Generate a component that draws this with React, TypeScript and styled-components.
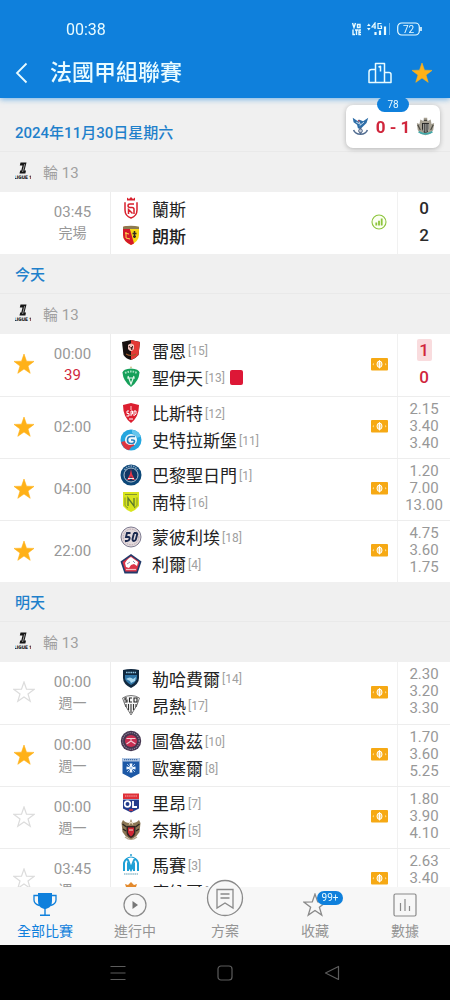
import React from "react";
import styled, { createGlobalStyle, css } from "styled-components";

const blue = "#0f80dc";
const gold = "#ffb118";

const GlobalStyle = createGlobalStyle`
  *, *::before, *::after { box-sizing: border-box; }
  body {
    margin: 0;
    background: #fff;
    color: #222;
    font-family: Roboto, "Noto Sans CJK TC", sans-serif;
  }
  button { font: inherit; color: inherit; background: none; border: 0; padding: 0; cursor: pointer; }
  h1, h2, ul, p { margin: 0; padding: 0; }
  ul { list-style: none; }
  svg { display: block; flex: none; }
`;

const Screen = styled.div`
  position: relative;
  display: flex;
  flex-direction: column;
  height: 100vh;
`;

const Header = styled.header`
  flex: none;
  position: relative;
  z-index: 1;
  background: ${blue};
  color: #e9fbff;
  box-shadow: 0 1px 6px rgba(15, 128, 220, 0.6);
`;

const StatusBar = styled.div`
  display: flex;
  align-items: center;
  justify-content: space-between;
  height: 48px;
  padding: 10px 28px 0 66px;
  font-size: 16px;
`;

const StatusIcons = styled.div`
  display: flex;
  align-items: center;
  gap: 6px;
`;

const TitleBar = styled.div`
  display: flex;
  align-items: center;
  height: 50px;
  padding: 0 17px 0 14px;
`;

const BackButton = styled.button`
  width: 36px;
`;

const Title = styled.h1`
  flex: 1;
  font-size: 22px;
  line-height: 30px;
  font-weight: 500;
`;

const HeaderActions = styled.div`
  display: flex;
  align-items: center;
  gap: 19px;
`;

const LiveCard = styled.aside`
  position: absolute;
  z-index: 2;
  top: 105px;
  right: 10px;
  display: flex;
  align-items: center;
  justify-content: space-between;
  width: 94px;
  height: 43px;
  padding: 0 5px;
  border-radius: 7px;
  background: #fff;
  box-shadow: 0 1px 5px rgba(0, 0, 0, 0.25);
`;

const LiveMinute = styled.span`
  position: absolute;
  top: -8px;
  left: 31px;
  width: 32px;
  height: 15px;
  border-radius: 8px;
  background: ${blue};
  color: #e9fbff;
  font-size: 10px;
  line-height: 15px;
  text-align: center;
`;

const LiveScore = styled.strong`
  color: #d0263c;
  font-size: 17px;
  font-weight: 700;
`;

const Feed = styled.main`
  flex: 1;
  min-height: 0;
  overflow-y: auto;
  scrollbar-width: none;
  padding-top: 14px;
  background: #f0f0f0;
`;

const DateHeading = styled.h2`
  height: 40px;
  padding: 0 15px;
  border-bottom: 1px solid #e9e9e9;
  color: #1f80cb;
  font-size: 15px;
  line-height: 43px;
  font-weight: 500;
`;

const RoundLine = styled.div`
  display: flex;
  align-items: center;
  gap: 12px;
  height: 40px;
  padding: 0 15px 2px;
  color: #a0a0a0;
  font-size: 15px;
`;

const MatchRow = styled.li`
  display: flex;
  height: 62px;
  background: #fff;
  & + & { border-top: 1px solid #ededed; }
`;

const Favourite = styled.button`
  display: grid;
  place-items: center;
  flex: none;
  width: 48px;
  padding-bottom: 2px;
`;

const TimeCell = styled.div`
  display: flex;
  flex-direction: column;
  justify-content: center;
  flex: none;
  width: 62px;
  padding-right: 13px;
  color: #989898;
  font-size: 15px;
  line-height: 21px;
  text-align: center;
`;

const TimeNote = styled.span<{ $live?: boolean }>`
  font-size: ${(p) => (p.$live ? 15 : 14)}px;
  ${(p) => p.$live && css`color: #d0263c;`}
`;

const Teams = styled.div`
  display: flex;
  flex-direction: column;
  justify-content: center;
  flex: 1;
  min-width: 0;
  padding: 0 0 3px 9px;
  border-left: 1px solid #ededed;
`;

const Team = styled.div<{ $winner?: boolean }>`
  display: flex;
  align-items: center;
  height: 27px;
  color: #222;
  font-size: 17px;
  font-weight: ${(p) => (p.$winner ? 500 : 400)};
  white-space: nowrap;
`;

const TeamName = styled.span`
  margin-left: 10px;
`;

const Rank = styled.span`
  margin-left: 2px;
  padding-top: 2px;
  color: #a0a0a0;
  font-size: 12px;
`;

const RedCard = styled.span`
  width: 13px;
  height: 15px;
  margin-left: 5px;
  border-radius: 2px;
  background: #dd1736;
`;

const FeatureCell = styled.div`
  display: grid;
  place-items: center;
  flex: none;
  width: 36px;
  padding-bottom: 2px;
`;

const Figures = styled.div`
  display: flex;
  flex-direction: column;
  align-items: center;
  justify-content: center;
  flex: none;
  width: 53px;
  padding-bottom: 3px;
  border-left: 1px solid #f1f1f1;
`;

const Odd = styled.span`
  color: #989898;
  font-size: 15px;
  line-height: 17px;
`;

const ScoreLine = styled.span`
  display: grid;
  place-items: center;
  height: 27px;
`;

const Score = styled.span<{ $live?: boolean; $fresh?: boolean }>`
  width: 15px;
  color: ${(p) => (p.$live ? "#d0263c" : "#2b2b2b")};
  background: ${(p) => (p.$fresh ? "#f9dcde" : "transparent")};
  border-radius: 2px;
  font-size: 17px;
  line-height: 22px;
  font-weight: 500;
  text-align: center;
`;

const TabBar = styled.nav`
  position: relative;
  display: flex;
  flex: none;
  height: 58px;
  background: #f7f7f7;
`;

const Tab = styled.button<{ $active?: boolean }>`
  display: flex;
  flex-direction: column;
  align-items: center;
  justify-content: flex-end;
  flex: 1;
  padding-bottom: 4px;
  color: ${(p) => (p.$active ? blue : "#949494")};
  font-size: 14px;
  line-height: 20px;
`;

const TabIcon = styled.span`
  position: relative;
  display: flex;
  align-items: flex-end;
  height: 26px;
  margin-bottom: 4px;
`;

const TabBadge = styled.span`
  position: absolute;
  top: 0;
  left: 14px;
  width: 26px;
  height: 14px;
  border-radius: 7px;
  background: ${blue};
  color: #e9fbff;
  font-size: 10px;
  line-height: 14px;
`;

const SystemBar = styled.nav`
  display: flex;
  flex: none;
  height: 55px;
  padding: 0 64px;
  background: #000;
`;

const SystemButton = styled.button`
  display: grid;
  place-items: center;
  flex: 1;
`;

const starPath = "M11 1 L13.5 8.2 L21 8.4 L15 13 L17.2 20.3 L11 16 L4.8 20.3 L7 13 L1 8.4 L8.5 8.2Z";

const Star = ({ on }: { on?: boolean }) => (
  <svg width="22" height="22" viewBox="0 0 22 22">
    <path
      d={starPath}
      fill={on ? gold : "none"}
      stroke={on ? gold : "#dcdcdc"}
      strokeWidth={on ? 0.6 : 1.2}
      strokeLinejoin="miter"
    />
  </svg>
);

const LeagueLogo = () => (
  <svg width="16" height="18" viewBox="0 0 16 18">
    <path d="M5.500 .5H11.500L9.500 8.500H11L10.400 11.500H4.500L5.200 8.500H6.300L7.500 3.500H4.800Z" fill="#161616" />
    <path d="M9.600 2.200 7.600 10" stroke="#f0f0f0" strokeWidth=".6" />
    <text x="8" y="17" textAnchor="middle" fontSize="5" fontWeight="900" textRendering="geometricPrecision" fill="#161616">LIGUE 1</text>
  </svg>
);

const Cash = () => (
  <svg width="17" height="13" viewBox="0 0 17 13">
    <rect width="17" height="12.500" rx="1" fill="#f6a914" />
    <ellipse cx="8.500" cy="6.250" rx="2.500" ry="3.200" fill="#fbd27a" stroke="#fff" strokeWidth="1" />
    <path d="M8.500 2.200v8.200" stroke="#fff" strokeWidth="1.100" />
    <path d="M2.800 5v2.500l-1.300-1.250zM14.200 5v2.500l1.300-1.250z" fill="#ffe5ad" />
  </svg>
);

const StatsBadge = () => (
  <svg width="16" height="16" viewBox="0 0 16 16">
    <circle cx="8" cy="8" r="7" fill="#fbfff2" stroke="#8cc43c" strokeWidth="1.100" />
    <path d="M5.300 8.500v3M8 6.800v4.700M10.700 4.500v7" stroke="#8cc43c" strokeWidth="1.800" />
  </svg>
);

const shield = "M3 3Q11 1 19 3V11Q19 17 11 21Q3 17 3 11Z";

const crests: Record<string, React.ReactNode> = {
  reims: (
    <>
      <path d="M7 .5 9 2l2-2 2 2 2-1.500V3.500H7Z" fill="#d8202d" />
      <path d="M5 5.200V13q0 6 6 8 6-2 6-8V5.200" fill="none" stroke="#d8202d" strokeWidth="1.500" />
      <path d="M14 7H10q-2 0-2 1.700T10 10.400h2q2 0 2 1.800V17M8.500 17v-4.500l4 4" fill="none" stroke="#d8202d" strokeWidth="1.500" />
    </>
  ),
  lens: (
    <>
      <path d={shield} fill="#f7d916" />
      <path d="M3 3Q6 2 9 2L14 19.500 11 21Q3 17 3 11Z" fill="#d4182a" />
      <path d="M3 2.700Q11 .8 19 2.700V5H3Z" fill="#8c7a52" />
      <path d="M14.500 7v7M12.500 9.500h4M13 12.500h3" stroke="#312b22" strokeWidth="1.500" />
      <path d="M5 9l4 1M6 14l4 1M6 8v6" stroke="#ffd84d" strokeWidth="1" />
    </>
  ),
  rennes: (
    <>
      <path d="M2 3 11 1l9 2-1.500 13Q15 20 11 21 6 20 3.500 16Z" fill="#17100f" />
      <path d="M11 1l9 2-1.500 13Q15 20 11 21Z" fill="#e33a35" />
      <path d="M8 6q3-3 6 0v4l-2 2h-2l-2-2Z" fill="#f2c2bb" />
      <path d="M9 7l1.500 2M13 7l-2 2 1 2" stroke="#43201d" strokeWidth="1" />
      <path d="M6 15q5 3 10 0" stroke="#9a5a30" strokeWidth="1.200" fill="none" />
    </>
  ),
  etienne: (
    <>
      <path d="M11 0l1 2h-2z" fill="#c9bb80" />
      <path d="M2.500 6.500Q3 3 11 2.500 19 3 19.500 6.500 19 15 11 21 3 15 2.500 6.500Z" fill="#16a05a" />
      <path d="M5 7q6-3 12 0" stroke="#9fe0bd" strokeWidth="2" strokeDasharray="1.600 1" fill="none" />
      <path d="M8 10l3 8 3-8M7 12h8" stroke="#e6f7ed" strokeWidth="1.200" fill="none" />
    </>
  ),
  brest: (
    <>
      <path d="M3 3 11 1l8 2q0 12-8 18Q3 15 3 3Z" fill="#dc1f30" />
      <path d="M11 4v4" stroke="#ffd0d0" strokeWidth="1" />
      <path d="M9 9H7v2.500h2V14H6.500M11 14V9h1.500v3H11M14 14V9h2v3l-1.500 1.500M9 17h4" stroke="#fff" strokeWidth="1" fill="none" />
    </>
  ),
  strasbourg: (
    <>
      <circle cx="11" cy="11" r="10.500" fill="#24a6df" />
      <path d="M1.200 13Q3 20 9 21.200L12 17 5 12Z" fill="#df3540" />
      <path d="M12 .8q7 1 9 7l-4 1-5-5z" fill="#65c5ed" />
      <circle cx="11" cy="11" r="6" fill="#f3fafc" />
      <path d="M15 7.500H11q-3.500 0-3.500 3.500t3.500 3.500h1.500q2-.5 2-2t-2-1.500H11" fill="none" stroke="#247fbd" strokeWidth="1.700" />
      <path d="M6 15q4 3 8 1" fill="none" stroke="#df3540" strokeWidth="1.400" />
    </>
  ),
  psg: (
    <>
      <circle cx="11" cy="11" r="10.500" fill="#0c4778" />
      <circle cx="11" cy="11" r="7" fill="#113664" stroke="#d4dfe9" strokeWidth=".8" />
      <path d="M4.500 6q2.500-4 6.500-4t6.500 4" stroke="#8ca7c3" strokeWidth="1.500" strokeDasharray="1.500 1" fill="none" />
      <path d="M11 5l1 5 3 6h-2.500L11 12l-1.500 4H7l3-6Z" fill="#e33445" />
      <path d="M8 14.500h6" stroke="#fff" strokeWidth=".9" />
    </>
  ),
  nantes: (
    <>
      <path d="M3 1h16v14q-3 4-8 6-5-2-8-6Z" fill="#d8e51e" />
      <path d="M5 3.500h12M5 6.500v8q2 2 3 2.500M17 6.500v8q-2 2-3 2.500" stroke="#84952a" strokeWidth="1" fill="none" />
      <path d="M8 15V7l6 8V7" stroke="#5b7a2d" strokeWidth="1.300" fill="none" />
    </>
  ),
  montpellier: (
    <>
      <circle cx="11" cy="11" r="10" fill="#e2d9dc" stroke="#7e7b91" strokeWidth="1" />
      <circle cx="11" cy="11" r="7.800" fill="none" stroke="#b7a5ad" strokeWidth="1" strokeDasharray="1.500 1" />
      <path d="M10.500 7H7l-1 4h2.500q1.500 0 1 2t-2.500 2H5M14 7h2q1.500 0 1 2l-1 4q-.5 2-2 2t-1.500-2l1-4q.3-2 1-2Z" fill="none" stroke="#1a294f" strokeWidth="1.900" />
    </>
  ),
  lille: (
    <>
      <path d="M11 1 21.500 8.500 17.500 20.500H4.500L.5 8.500Z" fill="#223b6b" />
      <path d="M11 3 19.500 9l-3 9.500h-11L2.500 9Z" fill="#dc3448" />
      <path d="M5 10q3-5 6-6l7 5-1 4-3-2-3 1-2 3-3-1Z" fill="#fff" />
      <path d="M7 11l3-2M13 8l2 2" stroke="#8d99b4" strokeWidth="1" />
      <path d="M6 16.500h10" stroke="#f3bdc3" strokeWidth="1.200" />
    </>
  ),
  havre: (
    <>
      <path d={shield} fill="#10283f" />
      <path d="M5 8h12v4q-2 4-6 6-5-3-6-6Z" fill="#2f74a6" />
      <path d="M6 5.500h10" stroke="#8fc4e2" strokeWidth="1.600" strokeDasharray="1.600 .6" />
      <path d="M6 12q4-3 7 0l3-2-1 4-4 2-1-2Z" fill="#a8d7ee" />
    </>
  ),
  angers: (
    <>
      <path d="M2.500 4Q11-1 19.500 4L17 11 11 21 5 11Z" fill="#f6f6f6" stroke="#777" strokeWidth="1" />
      <path d="M7 4H5v2h2v2H4.500M12 4H9.500v4H12M14 4h3v4h-3Z" stroke="#222" strokeWidth="1.100" fill="none" />
      <path d="M6 10v3M8.500 10v6M11 10v9M13.500 10v6M16 10v3" stroke="#333" strokeWidth="1.100" />
    </>
  ),
  toulouse: (
    <>
      <circle cx="11" cy="11" r="10.200" fill="#46364f" />
      <circle cx="11" cy="11" r="8.300" fill="none" stroke="#8d8099" strokeWidth="1.200" strokeDasharray="1.200 1" />
      <circle cx="11" cy="11" r="6" fill="#c92e51" />
      <path d="M6.500 8.500h9M11 8.500v3M6.500 14l4.500-3 4.500 3" stroke="#f5ced7" strokeWidth="1.100" fill="none" />
    </>
  ),
  auxerre: (
    <>
      <path d="M2.500 1h17V16.500q-4 2-8.500 4.500Q6.500 18.500 2.500 16.500Z" fill="#1c58a6" />
      <path d="M2.500 1h17v3.500h-17Z" fill="#b6cae5" />
      <path d="M4 2.700h14" stroke="#3f6da9" strokeWidth="1.200" strokeDasharray="1.300 .7" />
      <path d="M9.500 6.500h3l-.7 3.700 3.700-.7v3l-3.700-.7.7 3.700h-3l.7-3.700-3.700.7v-3l3.700.7Z" fill="#f5faff" />
      <path d="M7 7l8 8M15 7l-8 8" stroke="#a9c7ea" strokeWidth="1" />
    </>
  ),
  lyon: (
    <>
      <path d="M3 1.500h16V7H3Z" fill="#df3038" />
      <path d="M5 4h12" stroke="#f7b1b3" strokeWidth="1" strokeDasharray="1.400 .7" />
      <path d="M3 7.500h16v9l-8 4-8-4Z" fill="#223b8c" />
      <circle cx="7.500" cy="12" r="2.800" fill="none" stroke="#fff" strokeWidth="1.700" />
      <path d="M13 9v6h4" stroke="#fff" strokeWidth="1.800" fill="none" />
      <path d="M9 18h4" stroke="#df3038" strokeWidth="1.500" />
    </>
  ),
  nice: (
    <>
      <path d="M11 0l1.500 4q4 0 6.500-3l1.500 3-1 9-3 4-5.500 4-5.500-4-3-4-1-9L3 1q2.500 3 6.500 3Z" fill="#8b7654" />
      <path d="M2.500 5l4 3M3 10l3 2M19.500 5l-4 3M19 10l-3 2" stroke="#2a2420" strokeWidth="1.300" />
      <path d="M6.500 7h9v6q0 4-4.500 6-4.500-2-4.500-6Z" fill="#332322" />
      <path d="M8 8.500h6v5q-1 3-3 4-2-1-3-4Z" fill="#cf2635" />
      <path d="M9 11h4M9 5.500 11 3l2 2.500" stroke="#eee0c6" strokeWidth="1.200" fill="none" />
      <path d="M5 18q6 5 12 0" stroke="#b3a68d" strokeWidth="1.200" fill="none" />
    </>
  ),
  marseille: (
    <>
      <path d="M11 0v2" stroke="#279ed0" strokeWidth="1.500" />
      <path d="M4 17V9q1.500-5 4-3l3 8 3-8q2.500-2 4 3v8M8 17v-6l3 5 3-5v6" fill="none" stroke="#20a0d6" strokeWidth="2" />
      <path d="M6 5q5-4 10 0" fill="none" stroke="#20a0d6" strokeWidth="1.200" />
      <path d="M4 20h14" stroke="#92bdcc" strokeWidth="1.400" strokeDasharray="1.500 .6" />
    </>
  ),
  monaco: (
    <>
      <path d="M6 6 5 3l3 1 3-3 3 3 3-1-1 3Z" fill="#e38a2d" />
      <path d="M5 7h12v6q-1 5-6 8-5-3-6-8Z" fill="#dc2936" />
      <path d="M17 7v6q-1 5-6 8V13Z" fill="#fff" />
    </>
  ),
  palace: (
    <>
      <path d="M2 1l6 4 1-2 3 1 2 1 6-4-2 6-5 5-2 2-3-1L7 9 3 6Z" fill="#2f6fa8" />
      <path d="M6 6l4 2M10 10l5-4M9 5l2 4" stroke="#dce8f4" strokeWidth="1" />
      <path d="M8 4l2 1" stroke="#bf3746" strokeWidth="1.200" />
      <path d="M11 12v7M3 15q2 5 8 5t8-5" fill="none" stroke="#526d91" strokeWidth="1.800" />
      <circle cx="11" cy="16" r="2.200" fill="#c1c9d4" stroke="#435b82" />
    </>
  ),
  newcastle: (
    <>
      <path d="M9 1h4v4l4-2 1 5 3-1-1 8-3 4-6 2-6-2-3-4-1-8 3 1 1-5 4 2Z" fill="#a6a092" />
      <path d="M7 7h8v7q-1 4-4 5-3-1-4-5Z" fill="#252525" />
      <path d="M9 8v9M11.500 8v10M14 8v8" stroke="#e7e5df" strokeWidth="1" />
      <path d="M2 9l3 6M20 9l-3 6M9 4h4" stroke="#4b4a43" strokeWidth="1.400" />
      <path d="M3 17q8 5 16 0" fill="none" stroke="#42a9aa" strokeWidth="2" />
    </>
  ),
};

const Crest = ({ club, size = 22 }: { club: string; size?: number }) => (
  <svg width={size} height={size} viewBox="0 0 22 22">
    {crests[club]}
  </svg>
);

interface Side {
  club: string;
  name: string;
  rank?: number;
  winner?: boolean;
  redCard?: boolean;
}

interface Match {
  time: string;
  note?: string;
  live?: boolean;
  favourite?: boolean;
  finished?: boolean;
  home: Side;
  away: Side;
  score?: [number, number];
  odds?: string[];
}

interface Day {
  date: string;
  matches: Match[];
}

const days: Day[] = [
  {
    date: "2024年11月30日星期六",
    matches: [
      {
        time: "03:45",
        note: "完場",
        finished: true,
        home: { club: "reims", name: "蘭斯" },
        away: { club: "lens", name: "朗斯", winner: true },
        score: [0, 2],
      },
    ],
  },
  {
    date: "今天",
    matches: [
      {
        time: "00:00",
        note: "39",
        live: true,
        favourite: true,
        home: { club: "rennes", name: "雷恩", rank: 15 },
        away: { club: "etienne", name: "聖伊天", rank: 13, redCard: true },
        score: [1, 0],
      },
      {
        time: "02:00",
        favourite: true,
        home: { club: "brest", name: "比斯特", rank: 12 },
        away: { club: "strasbourg", name: "史特拉斯堡", rank: 11 },
        odds: ["2.15", "3.40", "3.40"],
      },
      {
        time: "04:00",
        favourite: true,
        home: { club: "psg", name: "巴黎聖日門", rank: 1 },
        away: { club: "nantes", name: "南特", rank: 16 },
        odds: ["1.20", "7.00", "13.00"],
      },
      {
        time: "22:00",
        favourite: true,
        home: { club: "montpellier", name: "蒙彼利埃", rank: 18 },
        away: { club: "lille", name: "利爾", rank: 4 },
        odds: ["4.75", "3.60", "1.75"],
      },
    ],
  },
  {
    date: "明天",
    matches: [
      {
        time: "00:00",
        note: "週一",
        home: { club: "havre", name: "勒哈費爾", rank: 14 },
        away: { club: "angers", name: "昂熱", rank: 17 },
        odds: ["2.30", "3.20", "3.30"],
      },
      {
        time: "00:00",
        note: "週一",
        favourite: true,
        home: { club: "toulouse", name: "圖魯茲", rank: 10 },
        away: { club: "auxerre", name: "歐塞爾", rank: 8 },
        odds: ["1.70", "3.60", "5.25"],
      },
      {
        time: "00:00",
        note: "週一",
        home: { club: "lyon", name: "里昂", rank: 7 },
        away: { club: "nice", name: "奈斯", rank: 5 },
        odds: ["1.80", "3.90", "4.10"],
      },
      {
        time: "03:45",
        note: "週一",
        home: { club: "marseille", name: "馬賽", rank: 3 },
        away: { club: "monaco", name: "摩納哥", rank: 2 },
        odds: ["2.63", "3.40", "2.50"],
      },
    ],
  },
];

const TeamLine = ({ side }: { side: Side }) => (
  <Team $winner={side.winner}>
    <Crest club={side.club} />
    <TeamName>{side.name}</TeamName>
    {side.rank && <Rank>[{side.rank}]</Rank>}
    {side.redCard && <RedCard />}
  </Team>
);

const MatchItem = ({ match }: { match: Match }) => (
  <MatchRow>
    <Favourite aria-label="收藏" disabled={match.finished}>
      {!match.finished && <Star on={match.favourite} />}
    </Favourite>
    <TimeCell>
      <time>{match.time}</time>
      {match.note && <TimeNote $live={match.live}>{match.note}</TimeNote>}
    </TimeCell>
    <Teams>
      <TeamLine side={match.home} />
      <TeamLine side={match.away} />
    </Teams>
    <FeatureCell>{match.finished ? <StatsBadge /> : <Cash />}</FeatureCell>
    <Figures>
      {match.score?.map((goals, i) => (
        <ScoreLine key={i}>
          <Score $live={match.live} $fresh={match.live && i === 0}>{goals}</Score>
        </ScoreLine>
      ))}
      {match.odds?.map((odd, i) => <Odd key={i}>{odd}</Odd>)}
    </Figures>
  </MatchRow>
);

export default function App() {
  return (
    <Screen>
      <GlobalStyle />
      <Header>
        <StatusBar>
          <span>00:38</span>
          <StatusIcons>
            <svg width="40" height="14" viewBox="0 0 40 14" fill="none" stroke="#e9fbff" strokeWidth="1.400">
              <path d="M1.500 1l1.500 4.500L4.500 1M6.500 2.500H9v3H6.500ZM2 7.500V12.500H4M4 8h3M5.500 8v5M10 8H8v4.500h2M8 10.300h2" />
              <path d="M16 4l1.800-2.500L19.600 4ZM16 6l1.800 2.500L19.600 6Z" fill="#e9fbff" stroke="none" />
              <path d="M24 7V1L21 5h4M30.500 1.500H27v5h3.500V4H29" strokeWidth="1.200" />
              <path d="M24.500 10v3M29 8.500V13M34 4.500V13" strokeWidth="2.200" />
              <path d="M38.500 1v12" strokeWidth="1" opacity=".4" />
            </svg>
            <svg width="25" height="14" viewBox="0 0 25 14">
              <rect x=".7" y="1" width="21.600" height="12" rx="4" fill="none" stroke="#e9fbff" strokeWidth="1.200" />
              <path d="M24 5v4" stroke="#e9fbff" strokeWidth="1.600" />
              <text x="11.500" y="10.500" textAnchor="middle" fontSize="10" fill="#e9fbff">72</text>
            </svg>
          </StatusIcons>
        </StatusBar>
        <TitleBar>
          <BackButton aria-label="返回">
            <svg width="16" height="22" viewBox="0 0 16 22">
              <path d="M12.500 1.500 3 11l9.500 9.500" fill="none" stroke="#e9fbff" strokeWidth="1.800" />
            </svg>
          </BackButton>
          <Title>法國甲組聯賽</Title>
          <HeaderActions>
            <button aria-label="積分榜">
              <svg width="24" height="22" viewBox="0 0 24 22" fill="none" stroke="#e9fbff" strokeWidth="1.500">
                <path d="M7.500 20.500V1.500h9v19M7.500 7.500H3.500Q1 7.500 1 10v10.500h22V12.500Q23 10.500 21 10.500H16.500M10.500 5l2-.7V9.500" strokeLinejoin="round" />
              </svg>
            </button>
            <button aria-label="收藏聯賽"><Star on /></button>
          </HeaderActions>
        </TitleBar>
      </Header>

      <LiveCard>
        <LiveMinute>78</LiveMinute>
        <Crest club="palace" size={19} />
        <LiveScore>0 - 1</LiveScore>
        <Crest club="newcastle" size={19} />
      </LiveCard>

      <Feed>
        {days.map((day) => (
          <section key={day.date}>
            <DateHeading>{day.date}</DateHeading>
            <RoundLine>
              <LeagueLogo />
              輪 13
            </RoundLine>
            <ul>
              {day.matches.map((match) => (
                <MatchItem key={match.home.club} match={match} />
              ))}
            </ul>
          </section>
        ))}
      </Feed>

      <TabBar>
        <Tab $active>
          <TabIcon>
            <svg width="24" height="25" viewBox="0 0 24 25">
              <path d="M5 1h14v8q0 6-5 7.500l-1.300.5v5.500H17V24H7v-1.500h4.300V17L10 16.500Q5 15 5 9Z" fill={blue} />
              <path d="M5 3.500H1V8q0 4 5.500 5.500M19 3.500h4V8q0 4-5.500 5.500" fill="none" stroke={blue} strokeWidth="1.300" />
            </svg>
          </TabIcon>
          全部比賽
        </Tab>
        <Tab>
          <TabIcon>
            <svg width="24" height="24" viewBox="0 0 24 24">
              <circle cx="12" cy="12" r="11" fill="none" stroke="#8a8a8a" strokeWidth="1.200" />
              <path d="M9.500 8v8l5.500-4Z" fill="#777" />
            </svg>
          </TabIcon>
          進行中
        </Tab>
        <Tab>
          <TabIcon>
            <svg width="38" height="38" viewBox="0 0 38 38">
              <circle cx="19" cy="19" r="17.500" fill="#f7f7f7" stroke="#8a8a8a" strokeWidth="1.300" />
              <path d="M11 10.500h16V29l-8-5-8 5ZM14.500 15h9M14.500 19h9" fill="none" stroke="#8a8a8a" strokeWidth="1.300" />
            </svg>
          </TabIcon>
          方案
        </Tab>
        <Tab>
          <TabIcon>
            <svg width="24" height="24" viewBox="0 0 22 22">
              <path d={starPath} fill="none" stroke="#8a8a8a" strokeWidth="1.200" />
            </svg>
            <TabBadge>99+</TabBadge>
          </TabIcon>
          收藏
        </Tab>
        <Tab>
          <TabIcon>
            <svg width="24" height="24" viewBox="0 0 24 24" fill="none" stroke="#8a8a8a" strokeWidth="1.200">
              <rect x="1" y="1" width="22" height="22" rx="1.500" />
              <path d="M7.500 10v8M12 6v12M16.500 13v5" />
            </svg>
          </TabIcon>
          數據
        </Tab>
      </TabBar>

      <SystemBar>
        <SystemButton aria-label="最近">
          <svg width="16" height="16" viewBox="0 0 16 16" stroke="#5c5c5c" strokeWidth="1.200">
            <path d="M.5 1.500h15M.5 8h15M.5 14.500h15" />
          </svg>
        </SystemButton>
        <SystemButton aria-label="主頁">
          <svg width="16" height="16" viewBox="0 0 16 16">
            <rect x="1" y="1" width="14" height="14" rx="3" fill="none" stroke="#5c5c5c" strokeWidth="1.200" />
          </svg>
        </SystemButton>
        <SystemButton aria-label="後退">
          <svg width="16" height="16" viewBox="0 0 16 16">
            <path d="M14.500 1.500v13L1.500 8Z" fill="none" stroke="#5c5c5c" strokeWidth="1.200" strokeLinejoin="round" />
          </svg>
        </SystemButton>
      </SystemBar>
    </Screen>
  );
}
